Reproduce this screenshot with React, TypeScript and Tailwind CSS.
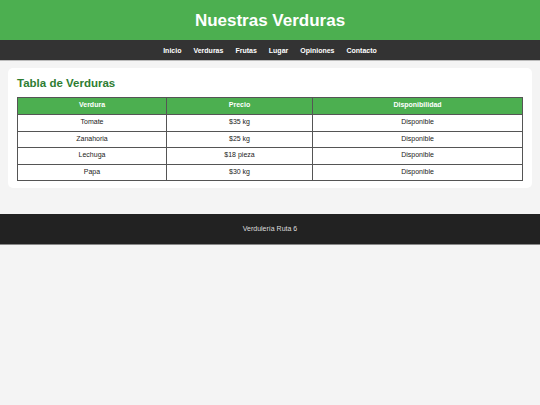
import React from "react";

const NAV = ["Inicio", "Verduras", "Frutas", "Lugar", "Opiniones", "Contacto"];

const ROWS = [
  { name: "Tomate", price: "$35 kg", stock: "Disponible" },
  { name: "Zanahoria", price: "$25 kg", stock: "Disponible" },
  { name: "Lechuga", price: "$18 pieza", stock: "Disponible" },
  { name: "Papa", price: "$30 kg", stock: "Disponible" },
];

export default function App() {
  return (
    <div className="min-h-[405px] bg-[#f4f4f4] font-['Liberation_Sans',Arial,sans-serif]">
      {/* Header */}
      <header className="h-[40px] bg-[#4caf50] flex items-center justify-center">
        <h1 className="text-[17px] font-bold text-white leading-none">Nuestras Verduras</h1>
      </header>

      {/* Nav */}
      <nav className="h-[21px] bg-[#333] border-b border-[#bbb] flex items-center justify-center gap-[12px]">
        {NAV.map((item) => (
          <a key={item} className="text-[7px] font-bold text-white leading-none">
            {item}
          </a>
        ))}
      </nav>

      {/* Main */}
      <main className="px-[8px] pt-[7px]">
        <section className="bg-white rounded-[5px] px-[9px] pt-[10px] pb-[7px]">
          <h2 className="text-[11.5px] font-bold text-[#2e7d32] leading-none mb-[7px]">
            Tabla de Verduras
          </h2>
          <table className="w-full border-collapse text-[7px] text-[#222]">
            <thead>
              <tr className="bg-[#4caf50] text-white">
                <th className="w-[149px] h-[17px] border border-[#555] font-bold">Verdura</th>
                <th className="w-[146px] h-[17px] border border-[#555] font-bold">Precio</th>
                <th className="h-[17px] border border-[#555] font-bold">Disponibilidad</th>
              </tr>
            </thead>
            <tbody>
              {ROWS.map((r, i) => (
                <tr key={r.name} className={i % 2 === 0 ? "h-[17px]" : "h-[16px]"}>
                  <td className="border border-[#555] text-center">{r.name}</td>
                  <td className="border border-[#555] text-center">{r.price}</td>
                  <td className="border border-[#555] text-center">{r.stock}</td>
                </tr>
              ))}
            </tbody>
          </table>
        </section>
      </main>

      {/* Footer */}
      <footer className="mt-[26px] h-[31px] bg-[#222] border-b border-[#888] flex items-center justify-center">
        <p className="text-[7px] text-[#ddd] leading-none">Verdulería Ruta 6</p>
      </footer>
    </div>
  );
}
